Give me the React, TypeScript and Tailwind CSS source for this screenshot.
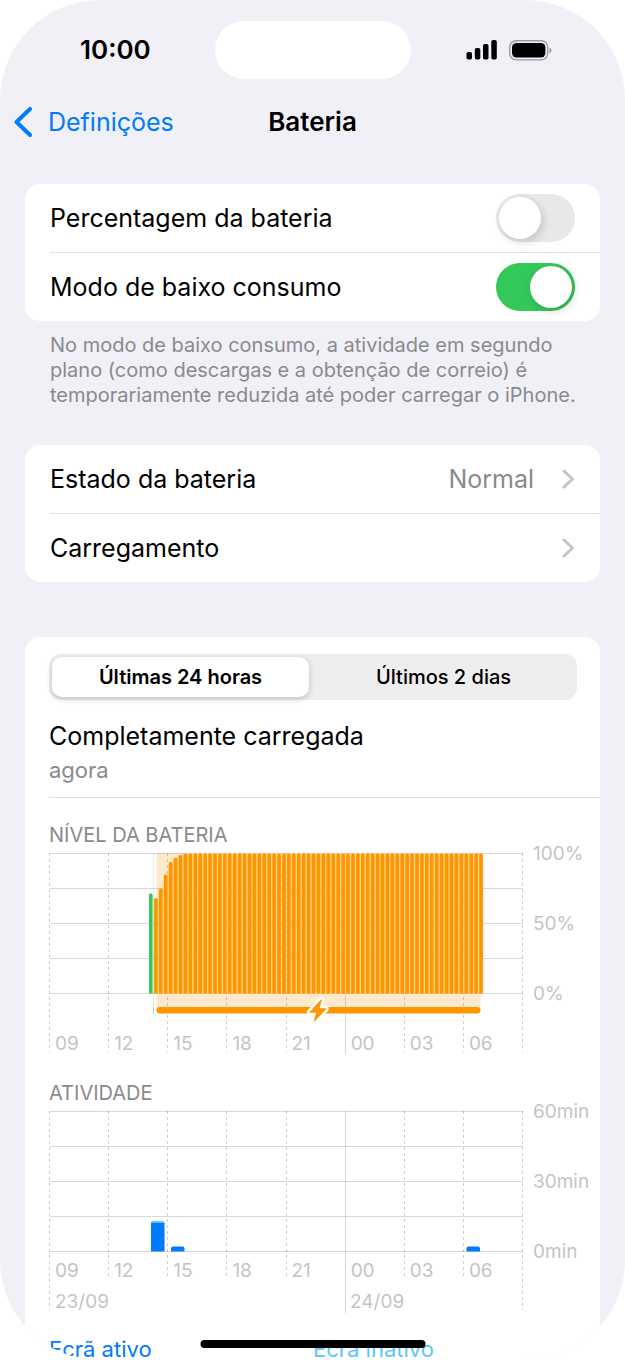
import { Children, useState, type ReactNode } from 'react';
import { clsx } from 'clsx';

const HOURS = ['09', '12', '15', '18', '21', '00', '03', '06'];
const COLUMN = 59.125; // 3 horas
const QUARTER = COLUMN / 12; // 15 minutos
const FIRST_SLOT = 21;
const LAST_SLOT = 87;
const RAMP = [68, 75, 85, 94, 97, 99];

const LEVELS = Array.from({ length: LAST_SLOT - FIRST_SLOT + 1 }, (_, i) => ({
  slot: FIRST_SLOT + i,
  level: RAMP[i] ?? 100,
}));

interface GridProps {
  labels: string[];
  hoursBottom: number;
  edgeBottom: number;
  midnightBottom: number;
}

/**
 * Linhas horizontais, linhas de horas e legendas comuns aos dois gráficos
 */
function Grid({ labels, hoursBottom, edgeBottom, midnightBottom }: GridProps) {
  return (
    <g>
      {[0, 1, 2, 3, 4].map((row) => (
        <line key={row} x1="1" x2="474" y1={8.5 + row * 35} y2={8.5 + row * 35} stroke="#3c3c43" strokeOpacity="0.2" />
      ))}
      {Array.from({ length: 9 }, (_, i) => {
        const x = Math.round(i * COLUMN) + 0.5;
        const midnight = i === 5;
        const edge = i === 0 || i === 8;
        return (
          <line
            key={i}
            x1={x}
            x2={x}
            y1="8"
            y2={midnight ? midnightBottom : edge ? edgeBottom : hoursBottom}
            stroke="#3c3c43"
            strokeOpacity={midnight ? 0.2 : 0.26}
            strokeDasharray={midnight ? undefined : '3 3'}
          />
        );
      })}
      {labels.map((label, i) => (
        <text key={label} x="484" y={15 + i * 70} className="fill-[#c4c4c6] text-[19px]">
          {label}
        </text>
      ))}
    </g>
  );
}

function HourLabels({ y }: { y: number }) {
  return (
    <g>
      {HOURS.map((hour, i) => (
        <text key={hour} x={6 + i * COLUMN} y={y} className="fill-[#c4c4c6] text-[19px]">
          {hour}
        </text>
      ))}
    </g>
  );
}

function BatteryChart() {
  return (
    <svg viewBox="0 0 551 214" className="block w-full overflow-visible" role="img" aria-label="Nível da bateria">
      <rect x="107.5" y="8" width="324" height="157" fill="#ffe9cd" />
      <rect x="104" y="8" width="1" height="157" fill="#d6f3e2" />
      <Grid labels={['100%', '50%', '0%']} hoursBottom={207} edgeBottom={207} midnightBottom={210} />
      <rect x="104" y="162" width="1" height="6" fill="#86dba0" />
      {LEVELS.map(({ slot, level }) => (
        <rect
          key={slot}
          x={slot * QUARTER + 1}
          y={148.5 - level * 1.4}
          width={slot === LAST_SLOT ? 4 : 5}
          height={level * 1.4}
          fill="#ffcf72"
          fillOpacity="0.85"
        />
      ))}
      <path d="M100 148.5V50a1.8 1.8 0 0 1 3.6 0V148.5Z" fill="#34c759" />
      {LEVELS.map(({ slot, level }) => {
        const x = slot * QUARTER + 1.6;
        const top = 148.5 - level * 1.4;
        return <path key={slot} d={`M${x} 148.5V${top + 1.6}q0-1.6 1.8-1.6t1.8 1.6V148.5Z`} fill="#ff9500" />;
      })}
      <rect x="107.5" y="162" width="324" height="6.5" rx="3.2" fill="#ff9500" />
      <path
        d="M272 154.500 260.500 166.900q-.4.800.5.800h6.100l-2.300 8.200q0 1.100.9.400l11.400-12.100q.5-.9-.4-.9h-6.200l2.400-8.200q.1-1.200-.9-.6Z"
        fill="#ff9500"
        stroke="#fff"
        strokeWidth="5"
        strokeLinejoin="round"
        paintOrder="stroke"
      />
      <HourLabels y={205} />
    </svg>
  );
}

function ActivityChart() {
  return (
    <svg viewBox="0 0 551 214" className="block w-full overflow-visible" role="img" aria-label="Atividade">
      <Grid labels={['60min', '30min', '0min']} hoursBottom={176} edgeBottom={207} midnightBottom={210} />
      <path d="M102 121v-1.500q0-1.500 1.500-1.500h10.500q1.500 0 1.500 1.500v1.500Z" fill="#5ac8fa" />
      <rect x="102" y="120" width="13.500" height="28.500" fill="#007aff" />
      <path d="M122 148.500v-3q0-2 2-2h9.500q2 0 2 2v3Z" fill="#007aff" />
      <path d="M417.500 148.500v-3q0-2 2-2h9.500q2 0 2 2v3Z" fill="#007aff" />
      <HourLabels y={174} />
      <text x="6" y="205" className="fill-[#c4c4c6] text-[19px]">23/09</text>
      <text x="301" y="205" className="fill-[#c4c4c6] text-[19px]">24/09</text>
    </svg>
  );
}

function Group({ className, children }: { className?: string; children: ReactNode }) {
  return (
    <ul className={clsx('divide-y divide-[#e1e1e3] rounded-[15px] bg-white pl-[25px]', className)}>
      {Children.map(children, (row) => (
        <li>{row}</li>
      ))}
    </ul>
  );
}

interface SwitchRowProps {
  id: string;
  label: string;
  checked: boolean;
  onChange: (value: boolean) => void;
}

function SwitchRow({ id, label, checked, onChange }: SwitchRowProps) {
  return (
    <div className="flex h-[68px] items-center justify-between pr-[25px]">
      <label htmlFor={id}>{label}</label>
      <span className="relative flex h-12 w-[79px]">
        <input
          id={id}
          type="checkbox"
          role="switch"
          checked={checked}
          onChange={(e) => onChange(e.target.checked)}
          className="h-full w-full appearance-none rounded-full bg-[#e8e8e9] checked:bg-[#34c759]"
        />
        <span
          className={clsx(
            'pointer-events-none absolute top-[3px] size-[42px] rounded-full bg-white shadow-[2px_3px_8px_rgba(0,0,0,0.16)]',
            checked ? 'right-[3px]' : 'left-[3px]'
          )}
        />
      </span>
    </div>
  );
}

function LinkRow({ label, value }: { label: string; value?: string }) {
  return (
    <button type="button" className="flex h-[68px] w-full items-center pr-[25px] text-left">
      <span className="flex-1">{label}</span>
      {value && <span className="text-[#8a8a8e]">{value}</span>}
      <svg width="13" height="20" viewBox="0 0 13 20" className="ml-7" fill="none">
        <path d="m2 2 8.500 8L2 18" stroke="#c4c4c6" strokeWidth="3" strokeLinecap="round" strokeLinejoin="round" />
      </svg>
    </button>
  );
}

const PERIODS = ['Últimas 24 horas', 'Últimos 2 dias'];

export default function App() {
  const [percentage, setPercentage] = useState(false);
  const [lowPower, setLowPower] = useState(true);
  const [period, setPeriod] = useState(PERIODS[0]);

  return (
    <div className="bg-white font-['Inter',sans-serif] text-[25px] leading-8 text-black">
      <div className="relative flex min-h-screen flex-col overflow-hidden rounded-[100px] bg-[#f1f0f6]">
        {/* Barra de estado */}
        <header className="grid h-[100px] grid-cols-[1fr_196px_1fr] items-center">
          <span className="pl-20 text-[26px] font-semibold">10:00</span>
          <span className="h-[58px] rounded-full bg-white" />
          <div className="flex items-center justify-end gap-3 pr-[73px]">
            <svg width="31" height="20" viewBox="0 0 31 20">
              <rect x="0.500" y="12" width="5.500" height="7.500" rx="1.800" />
              <rect x="8.800" y="8" width="5.500" height="11.500" rx="1.800" />
              <rect x="17" y="4" width="5.500" height="15.500" rx="1.800" />
              <rect x="25.300" y="0" width="5.500" height="19.500" rx="1.800" />
            </svg>
            <svg width="43" height="21" viewBox="0 0 43 21">
              <rect x="0.700" y="0.700" width="38" height="19.200" rx="6.500" fill="none" stroke="#9b9aa0" strokeWidth="1.400" />
              <rect x="3" y="3" width="33.400" height="14.600" rx="4.500" />
              <path d="M40.500 7.500q2 1 2 3t-2 3Z" fill="#9b9aa0" />
            </svg>
          </div>
        </header>

        {/* Navegação */}
        <nav className="grid h-11 grid-cols-[1fr_auto_1fr] items-center">
          <a href="#definicoes" className="flex items-center gap-4 pl-[14px] text-[#007aff]">
            <svg width="18" height="30" viewBox="0 0 18 30" fill="none">
              <path d="M16 2 2.500 15 16 28" stroke="currentColor" strokeWidth="4" strokeLinecap="round" strokeLinejoin="round" />
            </svg>
            Definições
          </a>
          <h1 className="text-[26px] font-semibold">Bateria</h1>
        </nav>

        <main className="mt-10 flex flex-1 flex-col px-[25px]">
          <Group>
            <SwitchRow id="percentage" label="Percentagem da bateria" checked={percentage} onChange={setPercentage} />
            <SwitchRow id="low-power" label="Modo de baixo consumo" checked={lowPower} onChange={setLowPower} />
          </Group>
          <p className="mt-3 pl-[25px] text-[20px] leading-[25px] text-[#8a8a8e]">
            No modo de baixo consumo, a atividade em segundo
            <br />
            plano (como descargas e a obtenção de correio) é
            <br />
            temporariamente reduzida até poder carregar o iPhone.
          </p>

          <Group className="mt-[37px]">
            <LinkRow label="Estado da bateria" value="Normal" />
            <LinkRow label="Carregamento" />
          </Group>

          <section className="mt-[55px] flex-1 rounded-t-[15px] bg-white pt-[17px] pl-6">
            {/* Período */}
            <fieldset className="mr-[23px] grid h-[46px] grid-cols-2 rounded-xl bg-[#eeeeef] p-[3px] text-[20px] font-medium">
              {PERIODS.map((item) => (
                <label
                  key={item}
                  className={clsx('flex items-center justify-center rounded-[10px]', {
                    'mr-1 bg-white font-semibold shadow-[0_2px_6px_rgba(0,0,0,0.2)]': item === period,
                  })}
                >
                  <input
                    type="radio"
                    name="period"
                    checked={item === period}
                    onChange={() => setPeriod(item)}
                    className="sr-only"
                  />
                  {item}
                </label>
              ))}
            </fieldset>

            <div className="border-b border-[#e1e1e3] pt-5 pb-[9px]">
              <h2>Completamente carregada</h2>
              <p className="text-[22px] leading-9 text-[#8a8a8e]">agora</p>
            </div>

            <h3 className="mt-[27px] text-[20px] leading-5 text-[#8a8a8e]">NÍVEL DA BATERIA</h3>
            <BatteryChart />
            <h3 className="mt-6 text-[20px] leading-5 text-[#8a8a8e]">ATIVIDADE</h3>
            <ActivityChart />

            <div className="mt-[22px] mr-[23px] grid grid-cols-2 text-[22px] leading-5">
              <span className="text-[#007aff]">Ecrã ativo</span>
              <span className="text-[#5ac8fa]">Ecrã inativo</span>
            </div>
          </section>
        </main>

        <div className="absolute bottom-3 left-1/2 h-2 w-[225px] -translate-x-1/2 rounded-full bg-black" />
      </div>
    </div>
  );
}
